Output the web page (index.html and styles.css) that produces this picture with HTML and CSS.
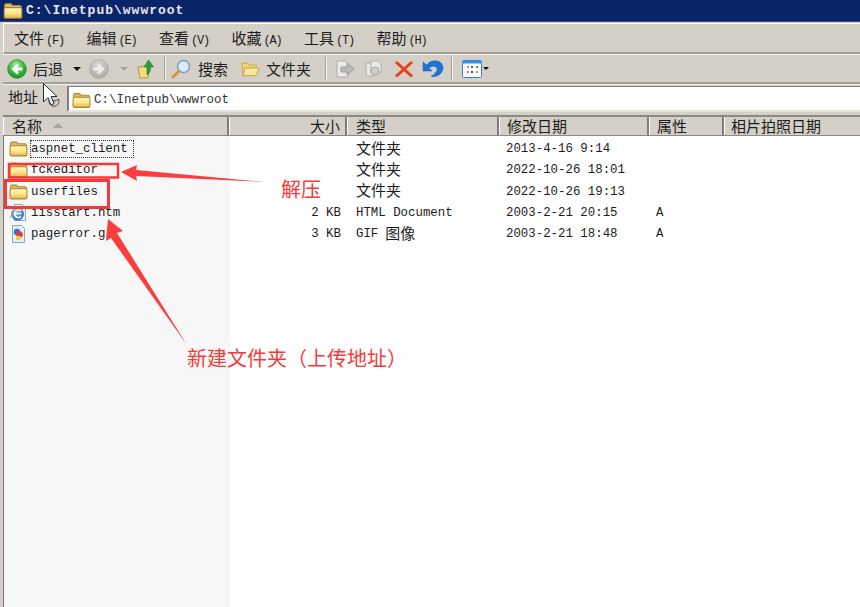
FILE: index.html
```html
<!DOCTYPE html>
<html lang="zh">
<head>
<meta charset="utf-8">
<title>C:\Inetpub\wwwroot</title>
<link rel="stylesheet" href="styles.css">
</head>
<body>
<svg class="defs" width="0" height="0" aria-hidden="true">
  <defs>
    <linearGradient id="fold" x1="0" y1="0" x2="0" y2="1"><stop offset="0" stop-color="#fff8c4"/><stop offset=".55" stop-color="#fbe38a"/><stop offset="1" stop-color="#e2b544"/></linearGradient>
    <radialGradient id="green" cx=".45" cy=".3" r=".8"><stop offset="0" stop-color="#a8ec9a"/><stop offset=".55" stop-color="#36b336"/><stop offset="1" stop-color="#158a20"/></radialGradient>
    <radialGradient id="grey" cx=".45" cy=".3" r=".8"><stop offset="0" stop-color="#dddbd8"/><stop offset="1" stop-color="#a4a2a0"/></radialGradient>
    <radialGradient id="ie" cx=".4" cy=".3" r=".8"><stop offset="0" stop-color="#8cc4f2"/><stop offset="1" stop-color="#1c62b8"/></radialGradient>
    <symbol id="folder" viewBox="0 0 18 16">
      <path d="M1.500 5V2.800C1.500 2 2 1.500 2.800 1.500H7l1.500 1.500H15c.8 0 1.500.7 1.500 1.500V6H1.500z" fill="#e2bd58" stroke="#a98a34"/>
      <path d="M1 6.500C1 5.700 1.600 5 2.400 5h13.200c.8 0 1.400.7 1.400 1.500v6.600c0 .8-.6 1.400-1.400 1.400H2.400c-.8 0-1.400-.6-1.400-1.400z" fill="url(#fold)" stroke="#a5872f"/>
    </symbol>
  </defs>
</svg>
<div class="window">
  <header class="titlebar">
    <svg class="ico-title"><use href="#folder"/></svg>
    <span class="title-text">C:\Inetpub\wwwroot</span>
  </header>
  <nav class="menubar">
    <span>文件<i>(F)</i></span><span>编辑<i>(E)</i></span><span>查看<i>(V)</i></span><span>收藏<i>(A)</i></span><span>工具<i>(T)</i></span><span>帮助<i>(H)</i></span>
  </nav>
  <div class="toolbar">
    <svg class="tb-round" viewBox="0 0 20 20"><circle cx="10" cy="10" r="9.300" fill="url(#green)" stroke="#1d8a2a" stroke-width=".7"/><path d="M15.500 10H7.500M11 5.500 6.500 10l4.500 4.500" fill="none" stroke="#fff" stroke-width="2.800"/></svg>
    <span class="tb-label back">后退</span>
    <span class="caret dark"></span>
    <svg class="tb-round fwd" viewBox="0 0 20 20"><circle cx="10" cy="10" r="9.300" fill="url(#grey)" stroke="#a5a39f" stroke-width=".7"/><path d="M4.500 10h8M9 5.500l4.500 4.500L9 14.500" fill="none" stroke="#eeedeb" stroke-width="2.800"/></svg>
    <span class="caret light"></span>
    <svg class="tb-up" viewBox="0 0 18 20"><path d="M1 8h4l1-1h6l1 2-2 10H3z" fill="#f7dc7e" stroke="#b5922f"/><path d="M10 16V8H7l4.500-7L16.500 8H13.500c0 4-1 6-3.500 8z" fill="#2f9f35" stroke="#1f7a24" stroke-width=".6"/></svg>
    <span class="sep"></span>
    <svg class="tb-search" viewBox="0 0 20 20"><circle cx="12.500" cy="7.500" r="6" fill="#d6ebfc" stroke="#7d9ac4" stroke-width="1.500"/><path d="M8 12 2 18" stroke="#d89640" stroke-width="3" stroke-linecap="round"/></svg>
    <span class="tb-label search">搜索</span>
    <svg class="tb-folder" viewBox="0 0 20 18"><path d="M1 3h6l1.500 2H16v3H5L3 15H2z" fill="#f2d474" stroke="#c9a445"/><path d="M4.500 8H19l-3 8H2z" fill="#fae89a" stroke="#c9a445"/></svg>
    <span class="tb-label folders">文件夹</span>
    <span class="sep sep2"></span>
    <svg class="tb-gray" viewBox="0 0 20 20"><path d="M2 2h8l3 3v13H2z" fill="#eceae5" stroke="#aeaca7"/><path d="M6 8h6V4l7 6-7 6v-3H6z" fill="#bcbab4" stroke="#a09e99"/></svg>
    <svg class="tb-gray copy" viewBox="0 0 20 20"><path d="M2 4h8v13H2z" fill="#e8e6e0" stroke="#b0aea9"/><path d="M7 2h7l3 3v9H7z" fill="#eceae5" stroke="#b0aea9"/><circle cx="11" cy="12" r="4" fill="#d0cec8" stroke="#a5a39e"/></svg>
    <svg class="tb-del" viewBox="0 0 20 20"><path d="M2 3 18 17.500M18 3 2 17.500" stroke="#e5401c" stroke-width="3"/></svg>
    <svg class="tb-undo" viewBox="0 0 22 20"><path d="M1 3v9h9L7 9c3-2.500 7-2.500 8 .5.700 2.500-2 5.500-6 8 7 1 12-3.500 12-9C21 2 11 -1.500 4.500 6z" fill="#1c72d8" stroke="#155cb4" stroke-width=".5"/></svg>
    <span class="sep sep3"></span>
    <svg class="tb-views" viewBox="0 0 20 18"><rect x=".5" y=".5" width="19" height="17" rx="1" fill="#fff" stroke="#2f86e0"/><rect x="1" y="1" width="18" height="2.500" fill="#3a90e4"/><path d="M5 6h2v2H5z" fill="#9090d4"/><path d="M9 6h2v2H9z" fill="#3a5fc0"/><path d="M14 6h2v2h-2z" fill="#3aa83a"/><path d="M5 11h2v2H5z" fill="#e8703a"/><path d="M9 11h2v2H9z" fill="#2050b0"/><path d="M14 11h2v2h-2z" fill="#d0a020"/></svg>
    <span class="caret dark small"></span>
  </div>
  <div class="addressbar">
    <span class="addr-label">地址</span>
    <div class="addr-input">
      <svg class="ico-addr"><use href="#folder"/></svg>
      <span class="addr-text">C:\Inetpub\wwwroot</span>
    </div>
  </div>
  <div class="list-head">
    <div class="col c-name">名称<span class="sort"></span></div>
    <div class="col c-size">大小</div>
    <div class="col c-type">类型</div>
    <div class="col c-date">修改日期</div>
    <div class="col c-attr">属性</div>
    <div class="col c-photo">相片拍照日期</div>
  </div>
  <div class="list">
    <div class="row">
      <div class="cell c-name"><svg class="ico"><use href="#folder"/></svg><span class="fname focus">aspnet_client</span></div>
      <div class="cell c-size"></div><div class="cell c-type zh">文件夹</div><div class="cell c-date">2013-4-16 9:14</div><div class="cell c-attr"></div>
    </div>
    <div class="row">
      <div class="cell c-name"><svg class="ico"><use href="#folder"/></svg><span class="fname">fckeditor</span></div>
      <div class="cell c-size"></div><div class="cell c-type zh">文件夹</div><div class="cell c-date">2022-10-26 18:01</div><div class="cell c-attr"></div>
    </div>
    <div class="row">
      <div class="cell c-name"><svg class="ico"><use href="#folder"/></svg><span class="fname">userfiles</span></div>
      <div class="cell c-size"></div><div class="cell c-type zh">文件夹</div><div class="cell c-date">2022-10-26 19:13</div><div class="cell c-attr"></div>
    </div>
    <div class="row">
      <div class="cell c-name"><svg class="ico" viewBox="0 0 18 18"><path d="M5 0.500h8l3 3v13H5z" fill="#eef2fa" stroke="#8fa3c4"/><circle cx="8" cy="10" r="6.500" fill="url(#ie)"/><path d="M4.500 9.500h7.500M11.500 7a3.800 3.800 0 1 0 0 5.500" fill="none" stroke="#fff" stroke-width="1.700"/><path d="M0.500 14C3 7 11 3 15 5" fill="none" stroke="#d9b23c"/></svg><span class="fname">iisstart.htm</span></div>
      <div class="cell c-size">2 KB</div><div class="cell c-type">HTML Document</div><div class="cell c-date">2003-2-21 20:15</div><div class="cell c-attr">A</div>
    </div>
    <div class="row">
      <div class="cell c-name"><svg class="ico" viewBox="0 0 18 18"><path d="M3 0.500h9l3 3v14H3z" fill="#e6ecf8" stroke="#8fa3c4"/><circle cx="7.500" cy="7" r="3.200" fill="#2f6fd0"/><circle cx="10" cy="9.500" r="3.200" fill="#e23b2e"/><rect x="6.500" y="11" width="4.500" height="4" fill="#f2cf3a"/></svg><span class="fname">pagerror.gif</span></div>
      <div class="cell c-size">3 KB</div><div class="cell c-type">GIF <b>图像</b></div><div class="cell c-date">2003-2-21 18:48</div><div class="cell c-attr">A</div>
    </div>
  </div>
</div>

<svg class="overlay" viewBox="0 0 860 607" aria-hidden="true">
  <rect x="9" y="164" width="109" height="13.500" fill="none" stroke="#f53a3a" stroke-width="2.500"/>
  <rect x="5.500" y="180.500" width="103" height="27" fill="none" stroke="#f53a3a" stroke-width="3"/>
  <path d="M121 172 137 165 136 170 265 182 136 176 137 181z" fill="#fb3d3d"/>
  <path d="M108 219 123 231 117 233 187 345 111 238 106 241z" fill="#fb3d3d"/>
  <path d="M49.500 99a5 5 0 1 0 9 0q-4.500 4-9 0z" fill="none" stroke="#444"/>
  <path d="M43.500 83.500V102l4.500-4.500 3 7.500 3-1.500-3-7h6z" fill="#fff" stroke="#2b2b2b"/>
</svg>
<span class="note note-1">解压</span>
<span class="note note-2">新建文件夹（上传地址）</span>
</body>
</html>
```

FILE: styles.css
```css
* { box-sizing: border-box; }
html, body { margin: 0; padding: 0; }
body { width: 860px; height: 607px; overflow: hidden; position: relative; background: #d4d0c8; font-family: "Liberation Mono", "Noto Sans CJK SC", monospace; color: #1c1c1c; }
.defs { position: absolute; }
.window { display: flex; flex-direction: column; height: 607px; }

.titlebar { height: 22px; background: #0a246a; display: flex; align-items: center; padding-left: 3px; border-bottom: 1px solid #3c4a70; }
.ico-title { width: 20px; height: 18px; }
.title-text { color: #e8e8ee; font-weight: 700; font-size: 13px; letter-spacing: 1.0px; margin-left: 3px; }

.menubar { height: 31px; margin: 1px 0 0 3px; padding: 0 0 2px 10px; display: flex; align-items: center; border-top: 1px solid #fff; border-bottom: 2px solid #a3a09a; border-left: 1px solid #fff; font: 15px "Noto Sans CJK SC", sans-serif; }
.menubar span { width: 72.500px; white-space: nowrap; }
.menubar i { font: 12px "Liberation Mono", monospace; letter-spacing: -1.200px; margin-left: 2px; }

.toolbar { height: 30px; margin-left: 3px; display: flex; align-items: center; border-top: 1px solid #f2f0ec; border-bottom: 2px solid #a3a09a; padding-left: 4px; }
.tb-round { width: 20px; height: 20px; flex: none; }
.tb-label { font: 15px "Noto Sans CJK SC", sans-serif; }
.back { margin-left: 6px; }
.caret { width: 0; height: 0; border-style: solid; border-width: 4px 4px 0; border-color: #111 transparent transparent; margin-left: 10px; }
.caret.light { border-top-color: #a5a39e; margin-left: 11px; }
.caret.small { margin-left: 1px; border-width: 3.500px 3.500px 0; }
.fwd { margin-left: 8px; }
.tb-up { width: 18px; height: 20px; margin-left: 9px; }
.sep { width: 1px; height: 23px; background: #a5a29b; box-shadow: 1px 0 0 #f5f3ef; margin-left: 9px; }
.tb-search { width: 20px; height: 20px; margin-left: 6px; }
.search { margin-left: 7px; }
.tb-folder { width: 19px; height: 18px; margin-left: 13px; }
.folders { margin-left: 6px; }
.sep2 { margin-left: 14px; }
.tb-gray { width: 20px; height: 20px; margin-left: 9px; }
.copy { margin-left: 9px; }
.tb-del { width: 20px; height: 20px; margin-left: 10px; }
.tb-undo { width: 22px; height: 20px; margin-left: 8px; }
.sep3 { margin-left: 7px; }
.tb-views { width: 20px; height: 18px; margin-left: 10px; }

.addressbar { height: 28px; margin-left: 3px; display: flex; align-items: center; border-top: 1px solid #f2f0ec; }
.addr-label { font: 15px "Noto Sans CJK SC", sans-serif; margin: 0 0 4px 5px; width: 59px; }
.addr-input { flex: 1; height: 26px; background: #fff; border-left: 2px solid #808080; border-top: 1px solid #808080; display: flex; align-items: center; padding: 4px 0 0 3px; border-bottom: 2px solid #e6e3dd; }
.ico-addr { width: 19px; height: 17px; }
.addr-text { font-size: 12.500px; margin-left: 3px; color: #333; }

.list-head { height: 21px; margin: 3px 0 0 3px; display: flex; border-top: 2px solid #8a8883; border-bottom: 1px solid #8a8883; font: 15px "Noto Sans CJK SC", sans-serif; background: #d4d0c8; }
.col { display: flex; align-items: center; border-left: 1px solid #fff; border-right: 2px solid #7e7c78; height: 100%; white-space: nowrap; padding-bottom: 2px; }
.c-name { width: 226px; padding-left: 8px; }
.c-size { width: 118px; justify-content: flex-end; padding-right: 5px; }
.c-type { width: 152px; padding-left: 8px; }
.c-date { width: 150px; padding-left: 7px; }
.c-attr { width: 75px; padding-left: 7px; }
.c-photo { flex: 1; padding-left: 6px; border-right: 0; }
.sort { width: 0; height: 0; border-style: solid; border-width: 0 5px 5px; border-color: transparent transparent #a8a6a0; margin-left: 11px; }

.list { flex: 1; background: linear-gradient(to right, #f7f7f7 226px, #fff 226px); margin-left: 3px; padding-top: 2.500px; border-left: 1px solid #777; }
.row { display: flex; height: 21.250px; align-items: center; font-size: 12.400px; }
.cell { display: flex; align-items: center; height: 21px; white-space: nowrap; border: 0; }
.row .c-name { width: 225px; padding-left: 5px; }
.row .c-size { width: 118px; justify-content: flex-end; padding-right: 6px; }
.row .c-type { padding-left: 9px; }
.row .c-date, .row .c-attr { padding-left: 7px; }
.row .zh { font: 15px "Noto Sans CJK SC", sans-serif; padding-bottom: 4px; }
.c-type b { font: 400 15px "Noto Sans CJK SC", sans-serif; margin-left: 7px; padding-bottom: 3px; }
.ico { width: 19px; height: 18px; flex: none; }
.fname { margin-left: 3px; padding: 2px 0; }
.focus { outline: 1px dotted #333; padding: 1px 5px 1px 0; }

.overlay { position: absolute; left: 0; top: 0; width: 860px; height: 607px; }
.note { position: absolute; color: #f53a3a; font: 20px/1 "Noto Sans CJK SC", sans-serif; }
.note-1 { left: 281px; top: 179px; }
.note-2 { left: 187px; top: 348px; }
```
